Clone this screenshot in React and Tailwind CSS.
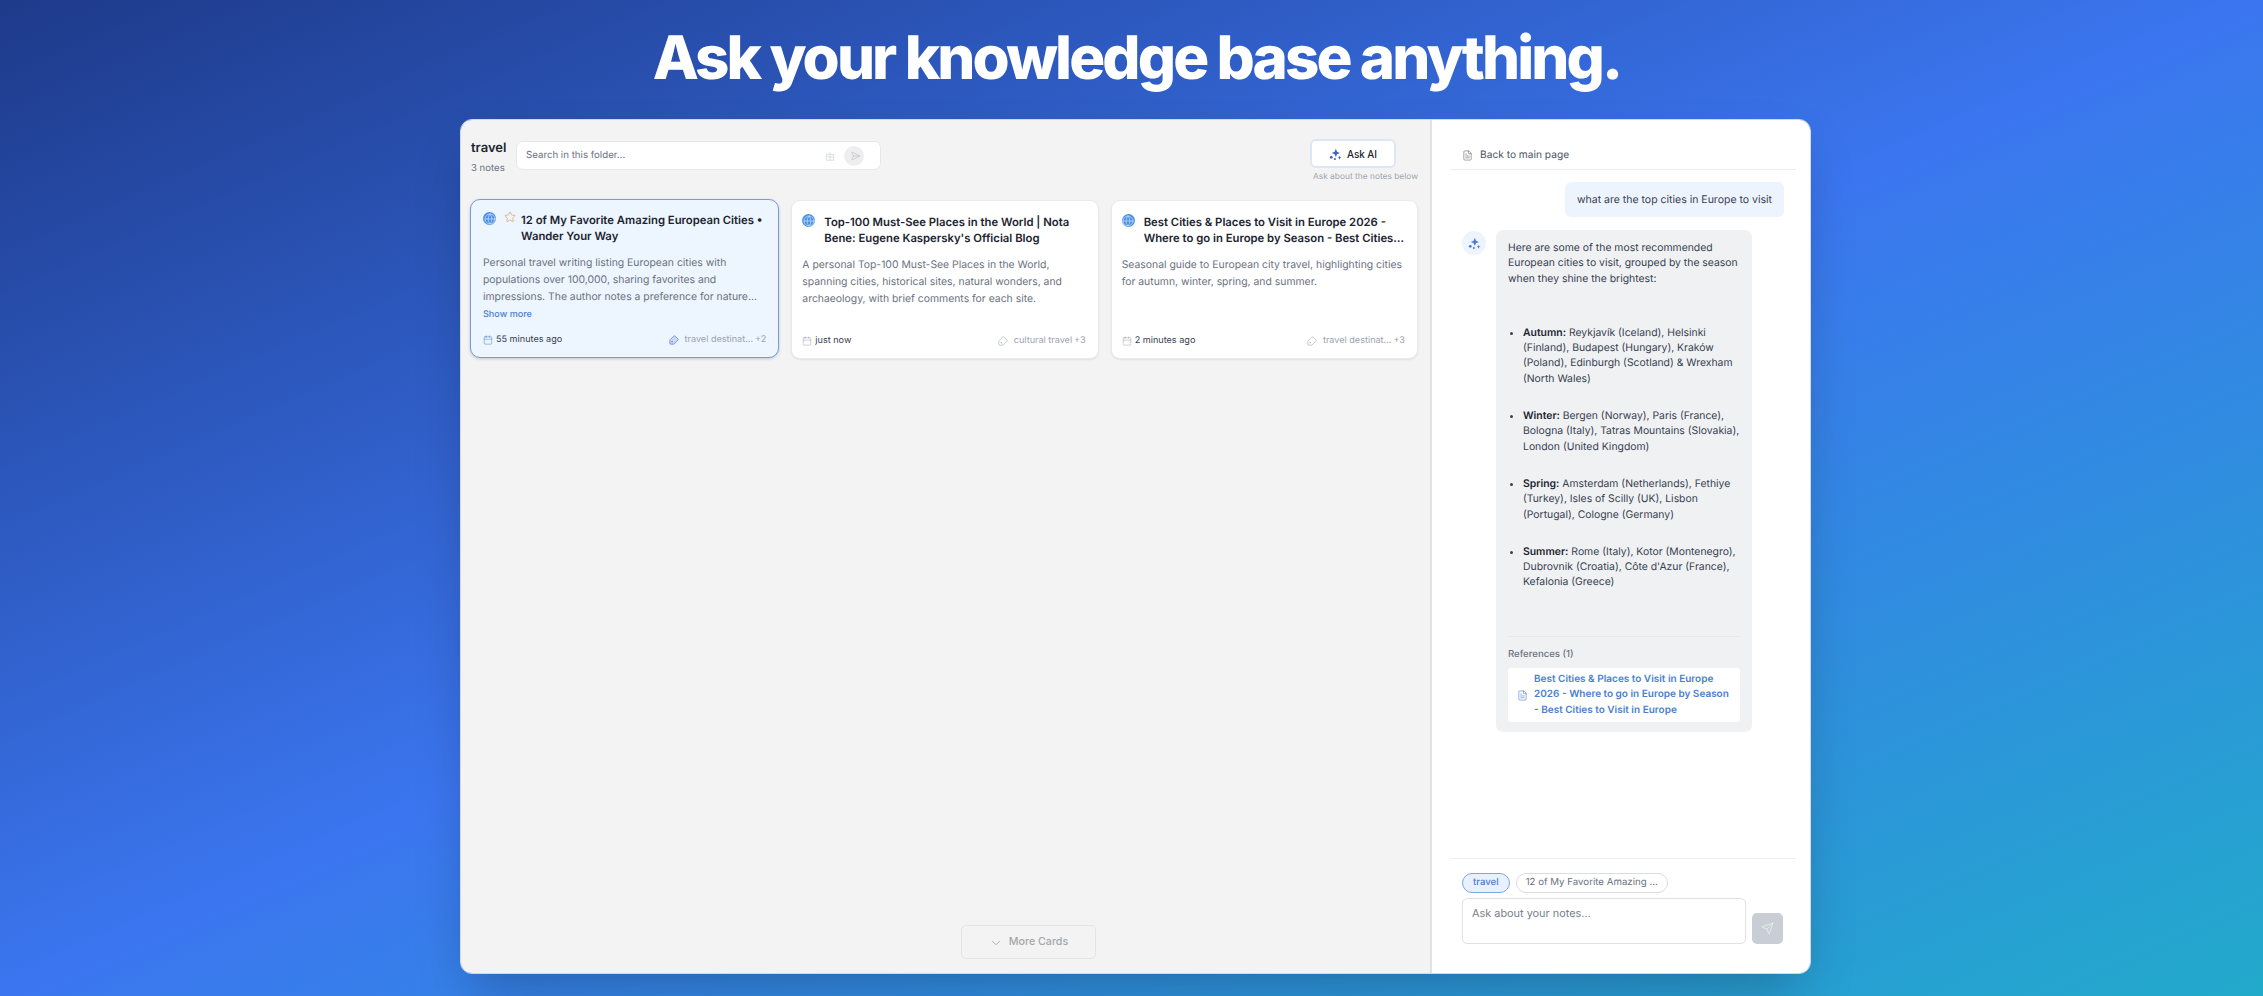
import { Calendar, ChevronDown, FileText, Globe, Send, Star, Tag } from "lucide-react";

const SparkGroup = ({ className }) => (
  <svg viewBox="0 0 16 16" className={className} fill="currentColor">
    <path d="M8.4 1 9.9 4.7l3.4 1.5-3.4 1.5-1.5 3.5-1.5-3.5-3.4-1.5 3.4-1.5z" />
    <path d="M13 9.6l.7 1.7 1.7.7-1.7.7-.7 1.7-.7-1.7-1.7-.7 1.7-.7z" />
    <circle cx="2.8" cy="11.4" r="1.7" />
    <circle cx="7.2" cy="13.6" r="1.3" />
  </svg>
);

const cards = [
  {
    title: "Top-100 Must-See Places in the World | Nota Bene: Eugene Kaspersky's Official Blog",
    text: "A personal Top-100 Must-See Places in the World, spanning cities, historical sites, natural wonders, and archaeology, with brief comments for each site.",
    time: "just now",
    tag: "cultural travel",
    more: "+3",
  },
  {
    title: "Best Cities & Places to Visit in Europe 2026 - Where to go in Europe by Season - Best Cities to Visit in Europe",
    text: "Seasonal guide to European city travel, highlighting cities for autumn, winter, spring, and summer.",
    time: "2 minutes ago",
    tag: "travel destinat...",
    more: "+3",
  },
];

const seasons = [
  ["Autumn:", "Reykjavík (Iceland), Helsinki (Finland), Budapest (Hungary), Kraków (Poland), Edinburgh (Scotland) & Wrexham (North Wales)"],
  ["Winter:", "Bergen (Norway), Paris (France), Bologna (Italy), Tatras Mountains (Slovakia), London (United Kingdom)"],
  ["Spring:", "Amsterdam (Netherlands), Fethiye (Turkey), Isles of Scilly (UK), Lisbon (Portugal), Cologne (Germany)"],
  ["Summer:", "Rome (Italy), Kotor (Montenegro), Dubrovnik (Croatia), Côte d'Azur (France), Kefalonia (Greece)"],
];

const GlobeBadge = () => (
  <span className="flex h-[13px] w-[13px] shrink-0 items-center justify-center rounded-full bg-[#4a90e2] text-[#cfe3fb]">
    <Globe size={12} strokeWidth={1.4} />
  </span>
);

const NoteCard = ({ card }) => (
  <div className="flex h-[159px] flex-col rounded-[9px] border border-[#e9eaec] bg-white pt-[13px] pr-[12px] pb-[10px] pl-[10px] shadow-[0_1px_2px_rgba(0,0,0,0.08)]">
    <div className="flex gap-[9px]">
      <GlobeBadge />
      <h3 className="line-clamp-2 text-[11.3px] leading-[16px] font-semibold text-[#1c2430]">{card.title}</h3>
    </div>
    <p className="mt-[10px] text-[10.4px] leading-[17px] text-[#6b7280]">{card.text}</p>
    <div className="mt-auto flex items-center justify-between text-[9.1px] leading-[14px]">
      <span className="flex items-center gap-[3px] text-[#374151]">
        <Calendar size={10} strokeWidth={1.2} className="text-[#9ca3af]" />
        {card.time}
      </span>
      <span className="flex items-center gap-[6px] text-[#9ca3af]">
        <Tag size={10} strokeWidth={1.4} className="-rotate-90" />
        <span>
          {card.tag}
          <span className="ml-[2px]">{card.more}</span>
        </span>
      </span>
    </div>
  </div>
);

export default function App() {
  return (
    <div className="flex h-[996px] flex-col items-center overflow-hidden bg-[linear-gradient(to_bottom_right,#1e3a8a,#3b76f0,#22aacb)] pl-[8px] font-['Inter',sans-serif] [text-rendering:geometricPrecision]">
      <h1 className="mt-[23px] ml-[2px] text-[60px] leading-[70px] font-extrabold tracking-[-0.048em] text-white">
        Ask your knowledge base anything.
      </h1>

      <div className="mt-[26px] flex h-[855px] w-[1351px] overflow-hidden rounded-[12px] border border-[#d5d9df] shadow-2xl">
        {/* left panel */}
        <div className="relative flex w-[971px] flex-col border-r-2 border-[#e1e2e4] bg-[#f3f3f3] px-[10px]">
          <div className="flex items-start pt-[19px]">
            <div className="w-[37px]">
              <div className="text-[13px] leading-[18px] font-semibold text-[#1c2430]">travel</div>
              <div className="mt-[5px] text-[9.6px] leading-[14px] text-[#6b7280]">3 notes</div>
            </div>
            <div className="mt-[2px] ml-[8px] flex h-[29px] w-[365px] items-center rounded-[7px] border border-[#e5e7eb] bg-white pr-[16px] pl-[9px]">
              <span className="flex-1 pt-[2px] text-[9.7px] text-[#6b7280]">Search in this folder...</span>
              <svg viewBox="0 0 12 12" className="h-[10px] w-[10px] text-[#d1d5db]" fill="none" stroke="currentColor" strokeWidth="0.9">
                <rect x="1.5" y="4" width="9" height="7" />
                <path d="M6 1v10M1.5 7h9" />
              </svg>
              <span className="ml-[9px] flex h-[20px] w-[20px] items-center justify-center rounded-full bg-[#eeeeef] text-[#b9bcc2]">
                <Send size={10} strokeWidth={1.4} className="rotate-45" />
              </span>
            </div>
            <div className="ml-auto flex flex-col items-end">
              <button className="mr-[24px] flex h-[29px] w-[86px] items-center justify-center gap-[5px] rounded-[6px] border-2 border-[#dbe7f7] bg-white pt-[1px] text-[9.9px] font-medium text-[#1c2430]">
                <SparkGroup className="h-[13px] w-[13px] text-[#3f63b8]" />
                Ask AI
              </button>
              <span className="mt-[3px] mr-[2px] text-[8.4px] leading-[12px] text-[#9ca3af]">Ask about the notes below</span>
            </div>
          </div>

          <div className="mt-[17px] mr-[2px] ml-[1px] grid grid-cols-3 gap-[12px]">
            {/* selected card */}
            <div className="-ml-[2px] flex h-[159px] -translate-y-[1px] flex-col rounded-[10px] border border-[#7d9ccb] bg-[#edf5fe] px-[12px] pt-[12px] pb-[10px] shadow-[0_1px_3px_rgba(59,90,150,0.3)]">
              <div className="flex">
                <GlobeBadge />
                <Star size={12} strokeWidth={1.4} className="mr-[5px] ml-[8px] shrink-0 -translate-y-[1px] text-[#e6995a]" />
                <h3 className="text-[11.3px] leading-[16px] font-semibold text-[#1c2430]">
                  12 of My Favorite Amazing European Cities • Wander Your Way
                </h3>
              </div>
              <p className="mt-[10px] line-clamp-3 text-[10.4px] leading-[17px] text-[#6b7280]">
                Personal travel writing listing European cities with populations over 100,000, sharing favorites and impressions. The author notes a preference for nature and quieter places to stay.
              </p>
              <span className="mt-[3px] text-[9.1px] leading-[14px] font-medium text-[#4a7fd0]">Show more</span>
              <div className="mt-auto flex items-center justify-between text-[9.1px] leading-[14px]">
                <span className="flex items-center gap-[3px] text-[#374151]">
                  <Calendar size={10} strokeWidth={1.3} className="text-[#5b8ad0]" />
                  55 minutes ago
                </span>
                <span className="flex items-center gap-[6px] text-[#9ca3af]">
                  <Tag size={10} strokeWidth={1.8} className="-rotate-90 fill-[#c9d8f5] text-[#5b84d0]" />
                  <span>
                    travel destinat...
                    <span className="ml-[2px]">+2</span>
                  </span>
                </span>
              </div>
            </div>
            {cards.map((card) => (
              <NoteCard key={card.time} card={card} />
            ))}
          </div>

          <button className="absolute bottom-[14px] left-[500px] flex h-[34px] w-[135px] items-center justify-center gap-[6px] rounded-[5px] border border-[#e4e4e6] pt-[1px] text-[10.7px] font-medium text-[#a3a6ab]">
            <ChevronDown size={14} strokeWidth={1.5} />
            More Cards
          </button>
        </div>

        {/* chat panel */}
        <div className="flex flex-1 flex-col bg-white pr-[14px] pl-[18px]">
          <div className="flex h-[50px] items-end border-b border-[#eceef1] pb-[6px] pl-[12px] text-[10.2px] text-[#4b5563]">
            <span className="flex items-center gap-[7px] leading-[16px]">
              <FileText size={11} strokeWidth={1.4} className="text-[#6b7280]" />
              Back to main page
            </span>
          </div>

          <div className="mt-[12px] flex flex-1 flex-col pr-[12px]">
            <div className="self-end rounded-[6px] bg-[#edf4fd] px-[12px] py-[9px] text-[10.5px] leading-[17px] text-[#374151]">
              what are the top cities in Europe to visit
            </div>
            <div className="mt-[13px] flex items-start">
              <span className="mt-[1px] ml-[12px] flex h-[24px] w-[24px] items-center justify-center rounded-full bg-[#edf4fd] text-[#4a7fd0]">
                <SparkGroup className="h-[13px] w-[13px]" />
              </span>
              <div className="ml-[10px] w-[256px] rounded-[7px] bg-[#f0f1f3] px-[12px] pt-[10px] pb-[10px] text-[10.4px] leading-[15.3px] text-[#374151]">
                <p>Here are some of the most recommended European cities to visit, grouped by the season when they shine the brightest:</p>
                <ul className="mt-[39px] list-disc pl-[15px]">
                  {seasons.map(([label, text]) => (
                    <li key={label} className="mb-[22px]">
                      <strong className="font-semibold text-[#1c2430]">{label}</strong> {text}
                    </li>
                  ))}
                </ul>
                <div className="mt-[46px] border-t border-[#e5e7eb] pt-[10px]">
                  <div className="text-[9.6px] leading-[15px] font-medium text-[#6b7280]">References (1)</div>
                  <div className="mt-[6px] flex items-center gap-[6px] rounded-[3px] bg-white px-[9px] py-[4px]">
                    <FileText size={11} strokeWidth={1.3} className="shrink-0 text-[#4a7fd0]" />
                    <span className="text-[10px] leading-[15.5px] font-semibold text-[#4a7fd0]">
                      Best Cities & Places to Visit in Europe 2026 - Where to go in Europe by Season - Best Cities to Visit in Europe
                    </span>
                  </div>
                </div>
              </div>
            </div>
          </div>

          <div className="h-[115px] border-t border-[#eceef1] pt-[14px] pl-[12px]">
            <div className="flex gap-[6px]">
              <span className="flex h-[20px] items-center rounded-full border border-[#7fa5dc] bg-[#e8f1fd] px-[10px] text-[9.6px] font-medium text-[#4a7fd0]">
                travel
              </span>
              <span className="flex h-[20px] items-center rounded-full border border-[#d9dce1] bg-white px-[9px] text-[9.7px] text-[#6b7280]">
                12 of My Favorite Amazing ...
              </span>
            </div>
            <div className="mt-[5px] flex items-end gap-[6px]">
              <div className="h-[46px] w-[284px] rounded-[5px] border border-[#dfe2e6] px-[9px] py-[6px] text-[10.9px] leading-[16px] text-[#7a8089]">
                Ask about your notes...
              </div>
              <span className="flex h-[31px] w-[31px] items-center justify-center rounded-[5px] bg-[#c9ced6] text-[#eef0f3]">
                <Send size={13} strokeWidth={1.4} />
              </span>
            </div>
          </div>
        </div>
      </div>
    </div>
  );
}
